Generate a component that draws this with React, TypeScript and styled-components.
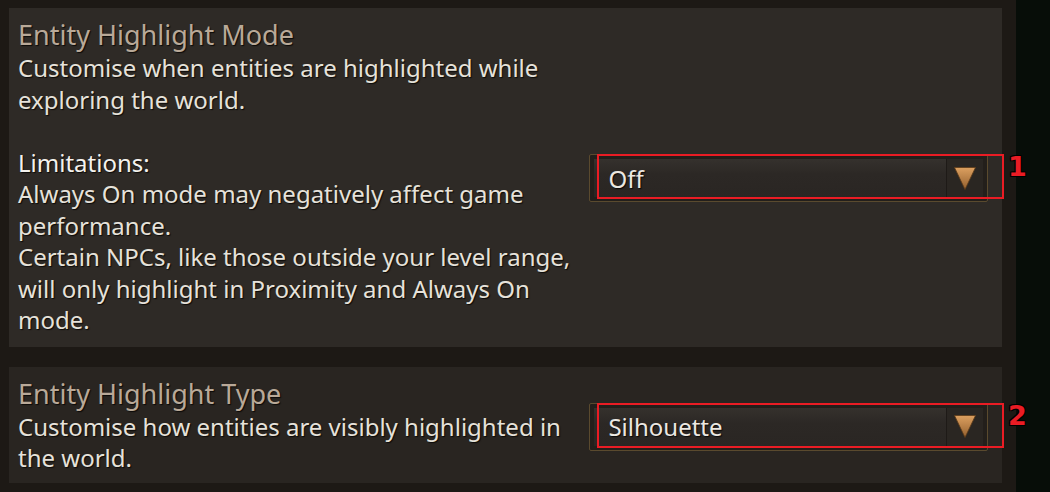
import styled, { createGlobalStyle } from 'styled-components'

const GlobalStyle = createGlobalStyle`
    html, body {
        margin: 0;
        padding: 0;
        background: #1c1814;
        font-family: 'Noto Sans', 'Open Sans', sans-serif;
    }
`

const Page = styled.div`
    display: flex;
    height: 492px;
    overflow: hidden;
`

const Content = styled.main`
    width: 1016px;
    padding: 8px 14px 0 9px;
    box-sizing: border-box;
    display: flex;
    flex-direction: column;
    gap: 20px;
    background: #1d1915;
`

const Side = styled.div`
    flex: 1;
    background: #070d08;
`

const Panel = styled.section<{ $tone: string; $bottom: number }>`
    background: ${(p) => p.$tone};
    display: flex;
    align-items: center;
    justify-content: space-between;
    padding: 10px 14px ${(p) => p.$bottom}px 9px;
`

const TextCol = styled.div`
    width: 572px;
`

const Title = styled.h3`
    margin: 0;
    font-size: 27px;
    font-weight: 400;
    line-height: 34px;
    color: #b9a998;
    text-shadow: 1px 1px 1px #0c0a08;
`

const Body = styled.p`
    margin: 0;
    font-size: 24px;
    line-height: 31.5px;
    color: #e6e2da;
    text-shadow: 1px 1px 1px #0c0a08;
`

const Gap = styled.div`
    height: 31.5px;
`

const Label = styled(Body)`
    color: #f4f2ee;
`

const DropWrap = styled.div`
    position: relative;
    width: 399px;
    margin-top: 3px;
`

const Dropdown = styled.div`
    height: 48px;
    box-sizing: border-box;
    border: 1px solid #5a4a2e;
    border-radius: 2px;
    padding: 4px;
    background: #231f1b;
    display: flex;
`

const Field = styled.div`
    flex: 1;
    display: flex;
    align-items: center;
    background: linear-gradient(#35312d, #2c2825 40%, #2a2623);
    padding-left: 14px;
    font-size: 24px;
    color: #ece8e2;
    text-shadow: 1px 1px 1px #0a0807;
`

const Arrow = styled.div`
    width: 36px;
    background: #2a2622;
    border-left: 1px solid #1e1a17;
    display: flex;
    align-items: center;
    justify-content: center;
`

const Mark = styled.div`
    position: absolute;
    left: 8px;
    top: 0;
    right: -16px;
    bottom: 3px;
    border: 2px solid #ea1c24;
    pointer-events: none;
`

const MarkNumber = styled.span`
    position: absolute;
    left: calc(100% + 6px);
    top: -6px;
    font-family: 'DejaVu Sans', sans-serif;
    font-weight: 700;
    font-size: 27px;
    line-height: 34px;
    color: #ea1c24;
    text-shadow: -1px -1px 0 #000, 1px -1px 0 #000, -1px 1px 0 #000, 1px 1px 0 #000;
`

function Select({ value, mark }: { value: string; mark: number }) {
    return (
        <DropWrap>
            <Dropdown>
                <Field>{value}</Field>
                <Arrow>
                    <svg width='24' height='25' viewBox='0 0 24 25'>
                        <defs>
                            <linearGradient id={`g${mark}`} x1='0' y1='0' x2='0' y2='1'>
                                <stop offset='0' stopColor='#dca060' />
                                <stop offset='1' stopColor='#94602e' />
                            </linearGradient>
                        </defs>
                        <path d='M1.5 1.5 L22.5 1.5 L12 23.5 Z' fill={`url(#g${mark})`} stroke='#5a3a18' strokeWidth='0.8' strokeLinejoin='round' />
                    </svg>
                </Arrow>
            </Dropdown>
            <Mark>
                <MarkNumber>{mark}</MarkNumber>
            </Mark>
        </DropWrap>
    )
}

export default function App() {
    return (
        <Page>
            <GlobalStyle />
            <Content>
                <Panel $tone='#2e2a26' $bottom={11}>
                    <TextCol>
                        <Title>Entity Highlight Mode</Title>
                        <Body>Customise when entities are highlighted while exploring the world.</Body>
                        <Gap />
                        <Label>Limitations:</Label>
                        <Body>Always On mode may negatively affect game performance.</Body>
                        <Body>Certain NPCs, like those outside your level range, will only highlight in Proximity and Always On mode.</Body>
                    </TextCol>
                    <Select value='Off' mark={1} />
                </Panel>
                <Panel $tone='#292521' $bottom={9}>
                    <TextCol>
                        <Title>Entity Highlight Type</Title>
                        <Body>Customise how entities are visibly highlighted in the world.</Body>
                    </TextCol>
                    <Select value='Silhouette' mark={2} />
                </Panel>
            </Content>
            <Side />
        </Page>
    )
}
